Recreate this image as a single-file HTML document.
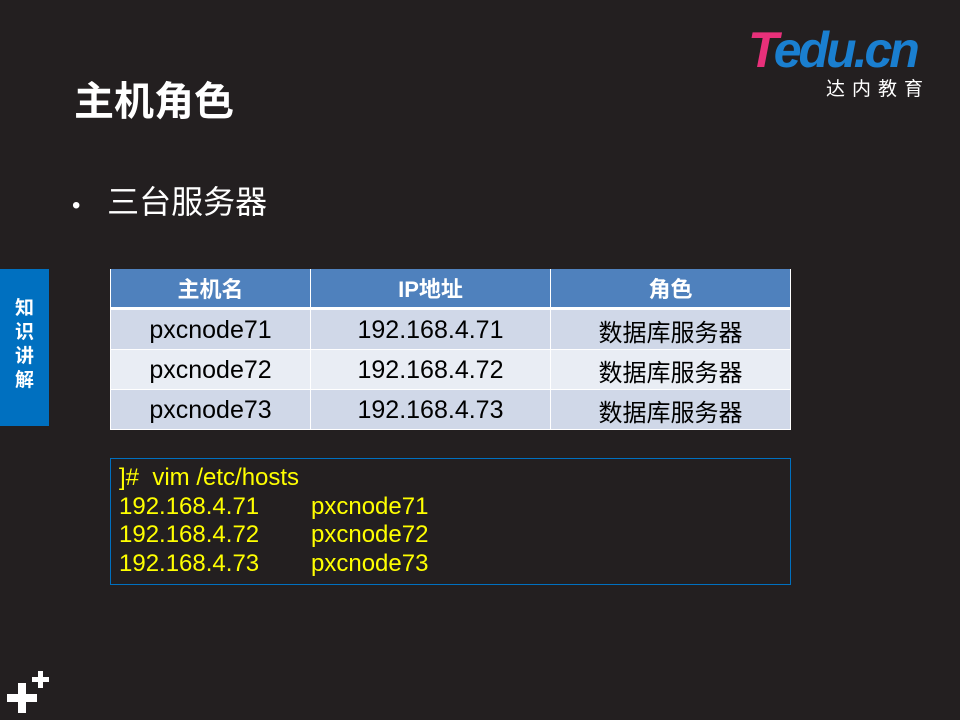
<!DOCTYPE html>
<html><head><meta charset="utf-8"><style>
body{margin:0;width:960px;height:720px;background:#231f20;position:relative;overflow:hidden;font-family:"Liberation Sans","Noto Sans CJK SC",sans-serif}
.a{position:absolute}
table{border-collapse:collapse;position:absolute;left:110px;top:269px;width:681px;table-layout:fixed}
td{text-align:center;font-size:25px;color:#000;padding:1px 0 0 0;border:1px solid #fff}
td.c{font-size:24px}
th{background:#4f81bd;color:#fff;font-size:22px;font-weight:bold;height:38px;padding:0;border-left:1px solid #fff;border-right:1px solid #fff;border-bottom:3px solid #fff}
tr.o td{background:#d0d8e8;height:38px}
tr.e td{background:#e9edf4;height:38px}
</style></head><body>
<div class="a" style="left:74px;top:77px;font-size:40px;font-weight:bold;color:#fff;line-height:50px">主机角色</div>
<div class="a" style="left:72px;top:182px;font-size:32px;color:#fff;line-height:40px"><span style="font-size:24px">•</span>&nbsp;&nbsp;&nbsp;三台服务器</div>
<div class="a" style="left:0;top:269px;width:49px;height:157px;background:#0070c0;color:#fff;font-weight:bold;font-size:19px;line-height:24px;text-align:center;padding-top:28px;box-sizing:border-box">知<br>识<br>讲<br>解</div>
<div class="a" style="left:748px;top:20px;font-size:50px;font-weight:bold;font-style:italic;letter-spacing:-3px;line-height:60px"><span style="color:#e8307a">T</span><span style="color:#1a7fd0">edu.cn</span></div>
<div class="a" style="left:826px;top:74px;font-size:19px;color:#fff;letter-spacing:7px">达内教育</div>
<table>
<colgroup><col style="width:200px"><col style="width:240px"><col></colgroup>
<tr><th>主机名</th><th>IP地址</th><th>角色</th></tr>
<tr class="o"><td>pxcnode71</td><td>192.168.4.71</td><td class="c">数据库服务器</td></tr>
<tr class="e"><td>pxcnode72</td><td>192.168.4.72</td><td class="c">数据库服务器</td></tr>
<tr class="o"><td>pxcnode73</td><td>192.168.4.73</td><td class="c">数据库服务器</td></tr>
</table>
<div class="a" style="left:110px;top:458px;width:681px;height:127px;border:1px solid #0070c0;box-sizing:border-box"></div>
<div class="a" style="left:119px;top:464px;color:#ffff00;font-size:24px;line-height:28.5px">]#&nbsp; vim /etc/hosts<br>192.168.4.71<br>192.168.4.72<br>192.168.4.73</div>
<div class="a" style="left:311px;top:492.5px;color:#ffff00;font-size:24px;line-height:28.5px">pxcnode71<br>pxcnode72<br>pxcnode73</div>
<svg class="a" style="left:0;top:660px" width="60" height="60"><g fill="#fff"><rect x="7" y="34" width="30" height="8"/><rect x="18" y="23" width="8" height="30"/><rect x="32" y="17" width="17" height="5"/><rect x="38" y="11" width="5" height="17"/></g></svg>
</body></html>
